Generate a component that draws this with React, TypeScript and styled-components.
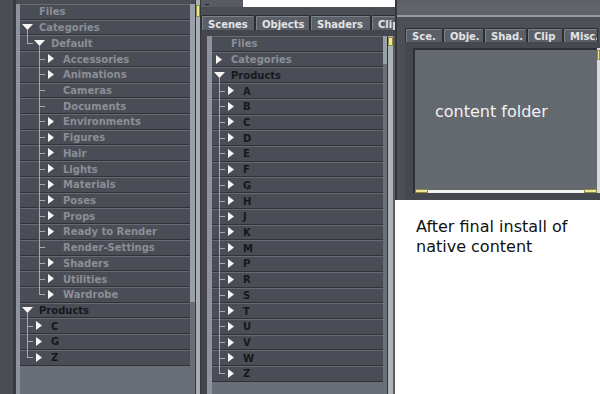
import React from 'react';
import styled, { createGlobalStyle, css } from 'styled-components';

const ROW_H = 15.72;

const Global = createGlobalStyle`
  html, body { margin: 0; padding: 0; background: #ffffff; }
  body { font-family: "DejaVu Sans", Verdana, sans-serif; }
`;

const Screen = styled.div`
  width: 600px;
  height: 394px;
  display: flex;
  overflow: hidden;
  background: #4a4d53;
`;

/* ---------- tree widgets ---------- */

const LeftPanel = styled.div`
  width: 195px;
  flex: 0 0 195px;
  display: flex;
  background: #4a4d53;
`;

const Gutter = styled.div`
  width: 13px;
  flex: 0 0 13px;
  background: #4a4d53;
  border-right: 3px solid #393b40;
`;

const TreeFrame = styled.div<{ $top: number }>`
  flex: 1;
  min-width: 0;
  display: flex;
  flex-direction: column;
  padding-top: ${p => p.$top}px;
  background: #4a4d53;
`;

const TreeBody = styled.div`
  flex: 1;
  display: flex;
  background: #6a6f77;
`;

const EdgeStrip = styled.div<{ $w: number }>`
  width: ${p => p.$w}px;
  flex: 0 0 ${p => p.$w}px;
  background: #8c959f;
`;

const Rows = styled.div`
  flex: 1;
  min-width: 0;
  display: flex;
  flex-direction: column;
`;

const ScrollTrack = styled.div<{ $w: number }>`
  width: ${p => p.$w}px;
  flex: 0 0 ${p => p.$w}px;
  display: flex;
  flex-direction: column;
  background: #6a6f77;
`;

const ScrollThumb = styled.div<{ $h: number }>`
  height: ${p => p.$h}px;
  background: #98a1ab;
`;

const Row = styled.div<{ $depth: number }>`
  box-sizing: border-box;
  height: ${ROW_H}px;
  flex: 0 0 ${ROW_H}px;
  display: flex;
  align-items: stretch;
  padding-left: ${p => p.$depth * 12}px;
  background: #4a4d55;
  border-bottom: 1px solid #303237;
  box-shadow: inset 0 1px 0 #666a72;
`;

const lineColor = '#a4a9af';

const Slot = styled.div<{ $branch: boolean; $last: boolean }>`
  position: relative;
  width: 14px;
  flex: 0 0 14px;
  display: flex;
  align-items: center;
  justify-content: center;
  ${p =>
    p.$branch &&
    css`
      &::before {
        content: '';
        position: absolute;
        left: -5px;
        top: -1px;
        width: 1px;
        height: ${p.$last ? 'calc(50% + 1px)' : 'calc(100% + 2px)'};
        background: ${lineColor};
      }
      &::after {
        content: '';
        position: absolute;
        left: -5px;
        top: 50%;
        width: 6px;
        height: 1px;
        background: ${lineColor};
      }
    `}
`;

const Stem = styled.span`
  position: absolute;
  left: 7px;
  top: calc(50% + 3px);
  bottom: -1px;
  width: 1px;
  background: ${lineColor};
`;

const Label = styled.span<{ $dim: boolean }>`
  align-self: center;
  margin-left: 5px;
  padding-top: 1px;
  font-size: 10px;
  font-weight: bold;
  white-space: nowrap;
  color: ${p => (p.$dim ? '#8b8f96' : '#17181b')};
`;

type Exp = 'down' | 'right' | 'none';
type Item = { label: string; depth: number; exp: Exp; dim: boolean; last?: boolean; kids?: boolean };

const DownTri = () => (
  <svg width="11" height="6" viewBox="0 0 11 6" style={{ position: 'relative', zIndex: 1 }}>
    <polygon points="0,0 11,0 5.5,6" fill="#f6f6f6" />
  </svg>
);

const RightTri = () => (
  <svg width="6" height="9" viewBox="0 0 6 9">
    <polygon points="0,0 6,4.5 0,9" fill="#f6f6f6" />
  </svg>
);

const TreeRow = ({ it }: { it: Item }) => (
  <Row $depth={it.depth}>
    <Slot $branch={it.depth > 0} $last={!!it.last}>
      {it.exp === 'down' && <DownTri />}
      {it.exp === 'right' && <RightTri />}
      {it.exp === 'down' && it.kids && <Stem />}
    </Slot>
    <Label $dim={it.dim}>{it.label}</Label>
  </Row>
);

const leftItems: Item[] = [
  { label: 'Files', depth: 0, exp: 'none', dim: true },
  { label: 'Categories', depth: 0, exp: 'down', dim: true, kids: true },
  { label: 'Default', depth: 1, exp: 'down', dim: true, last: true, kids: true },
  ...[
    ['Accessories', 'right'],
    ['Animations', 'right'],
    ['Cameras', 'none'],
    ['Documents', 'none'],
    ['Environments', 'right'],
    ['Figures', 'right'],
    ['Hair', 'right'],
    ['Lights', 'right'],
    ['Materials', 'right'],
    ['Poses', 'right'],
    ['Props', 'right'],
    ['Ready to Render', 'right'],
    ['Render-Settings', 'none'],
    ['Shaders', 'right'],
    ['Utilities', 'right'],
    ['Wardrobe', 'right'],
  ].map(([label, exp], i, arr) => ({
    label,
    depth: 2,
    exp: exp as Exp,
    dim: true,
    last: i === arr.length - 1,
  })),
  { label: 'Products', depth: 0, exp: 'down', dim: false, kids: true },
  ...['C', 'G', 'Z'].map((label, i, arr) => ({
    label,
    depth: 1,
    exp: 'right' as Exp,
    dim: false,
    last: i === arr.length - 1,
  })),
];

const letters = ['A', 'B', 'C', 'D', 'E', 'F', 'G', 'H', 'J', 'K', 'M', 'P', 'R', 'S', 'T', 'U', 'V', 'W', 'Z'];

const midItems: Item[] = [
  { label: 'Files', depth: 0, exp: 'none', dim: true },
  { label: 'Categories', depth: 0, exp: 'right', dim: true },
  { label: 'Products', depth: 0, exp: 'down', dim: false, kids: true },
  ...letters.map((label, i, arr) => ({
    label,
    depth: 1,
    exp: 'right' as Exp,
    dim: false,
    last: i === arr.length - 1,
  })),
];

/* ---------- splitters / markers ---------- */

const Splitter = styled.div`
  position: relative;
  width: 4px;
  flex: 0 0 4px;
  background: #a8aeb4;
  border-left: 1px solid #34363b;
  border-right: 1px solid #34363b;
`;

const Marker = styled.div<{ $w: number; $h: number; $top: number }>`
  position: absolute;
  left: 0;
  top: ${p => p.$top}px;
  box-sizing: border-box;
  width: ${p => p.$w}px;
  height: ${p => p.$h}px;
  background: #ece79c;
  border: 1px solid #8f8a3e;
`;

/* ---------- middle panel ---------- */

const MiddlePanel = styled.div`
  width: 194px;
  flex: 0 0 194px;
  display: flex;
  flex-direction: column;
  background: #4b4e54;
`;

const TopStrip = styled.div`
  height: 7px;
  flex: 0 0 7px;
  display: flex;
`;

const TopGray = styled.div`
  position: relative;
  width: 42px;
  background: #585b61;
`;

const Dash = styled.span`
  position: absolute;
  left: 4px;
  top: 4px;
  width: 4px;
  height: 1px;
  background: #1f2023;
`;

const TopWhite = styled.div`
  flex: 1;
  background: #ffffff;
`;

const TabBar = styled.div<{ $h: number; $mt: number; $ml: number }>`
  height: ${p => p.$h}px;
  flex: 0 0 ${p => p.$h}px;
  margin-top: ${p => p.$mt}px;
  margin-left: ${p => p.$ml}px;
  display: flex;
  overflow: hidden;
`;

const Tab = styled.div<{ $w?: number }>`
  box-sizing: border-box;
  ${p => (p.$w ? `width: ${p.$w}px; flex: 0 0 ${p.$w}px;` : 'flex: 1 0 auto;')}
  padding: 2px 0 0 6px;
  display: flex;
  align-items: center;
  background: #5b5f67;
  border: 1px solid #2b2d31;
  border-bottom: none;
  border-radius: 2px 2px 0 0;
  box-shadow: inset 1px 1px 0 #7d8189;
  font-size: 10px;
  font-weight: bold;
  color: #e2e3e5;
  white-space: nowrap;
  overflow: hidden;
`;

const MidBody = styled.div`
  flex: 1;
  display: flex;
  padding: 6px 0 0 6px;
  background: #43464c;
  min-height: 0;
`;

const MidTree = styled.div`
  flex: 1;
  display: flex;
  min-width: 0;
  background: #6a6f77;
`;

const SideRail = styled.div`
  position: relative;
  width: 5px;
  flex: 0 0 5px;
  background: #aeb3b8;
  border-left: 1px solid #303236;
  border-right: 2px solid #595d63;
`;

/* ---------- right column ---------- */

const RightColumn = styled.div`
  flex: 1;
  display: flex;
  flex-direction: column;
  background: #ffffff;
`;

const Viewer = styled.div`
  height: 200px;
  flex: 0 0 200px;
  display: flex;
  flex-direction: column;
  background: #4c4f55;
  border-left: 2px solid #34363b;
`;

const ViewerHeader = styled.div`
  height: 15px;
  flex: 0 0 15px;
  background: linear-gradient(180deg, #5c6066 0%, #62666c 60%, #5c6066 100%);
  border-bottom: 2px solid #979ba1;
`;

const ViewerPanel = styled.div`
  flex: 1;
  display: flex;
  margin-left: 8px;
  padding: 6px 0 7px 8px;
  background: #45484e;
`;

const ContentCol = styled.div`
  flex: 1;
  display: flex;
  flex-direction: column;
`;

const ContentBox = styled.div`
  flex: 1;
  padding: 52px 0 0 20px;
  background: #646970;
  border-top: 2px solid #2e3034;
  border-left: 2px solid #2e3034;
  font-size: 16px;
  line-height: 20px;
  color: #f2f2f2;
`;

const HScroll = styled.div`
  position: relative;
  height: 3px;
  flex: 0 0 3px;
  background: #f2f2f0;
  border-left: 2px solid #2e3034;
`;

const HMarker = styled.div<{ $side: 'left' | 'right' }>`
  position: absolute;
  top: -1px;
  ${p => (p.$side === 'left' ? 'left: 0;' : 'right: 0;')}
  box-sizing: border-box;
  width: 13px;
  height: 4px;
  background: #ece79c;
  border: 1px solid #8f8a3e;
`;

const VScroll = styled.div`
  position: relative;
  width: 3px;
  flex: 0 0 3px;
  background: #d8dadc;
  border-right: 0;
`;

const Caption = styled.div`
  padding: 17px 0 0 21px;
  max-width: 170px;
  font-size: 16px;
  line-height: 20px;
  color: #111111;
`;

export default function App() {
  return (
    <>
      <Global />
      <Screen>
        <LeftPanel>
          <Gutter />
          <TreeFrame $top={4}>
            <TreeBody>
              <EdgeStrip $w={4} />
              <Rows>
                {leftItems.map((it, i) => (
                  <TreeRow key={i} it={it} />
                ))}
              </Rows>
              <ScrollTrack $w={5}>
                <ScrollThumb $h={298} />
              </ScrollTrack>
            </TreeBody>
          </TreeFrame>
        </LeftPanel>

        <Splitter>
          <Marker $w={4} $h={12} $top={5} />
        </Splitter>

        <MiddlePanel>
          <TopStrip>
            <TopGray>
              <Dash />
            </TopGray>
            <TopWhite />
          </TopStrip>
          <TabBar $h={15} $mt={8} $ml={0}>
            <Tab $w={54}>Scenes</Tab>
            <Tab $w={55}>Objects</Tab>
            <Tab $w={61}>Shaders</Tab>
            <Tab>Clip</Tab>
          </TabBar>
          <MidBody>
            <MidTree>
              <EdgeStrip $w={5} />
              <Rows>
                {midItems.map((it, i) => (
                  <TreeRow key={i} it={it} />
                ))}
              </Rows>
              <ScrollTrack $w={4}>
                <ScrollThumb $h={28} />
              </ScrollTrack>
            </MidTree>
            <SideRail>
              <Marker $w={5} $h={9} $top={1} />
            </SideRail>
          </MidBody>
        </MiddlePanel>

        <RightColumn>
          <Viewer>
            <ViewerHeader />
            <TabBar $h={14} $mt={11} $ml={8}>
              <Tab $w={38}>Sce.</Tab>
              <Tab $w={41}>Obje.</Tab>
              <Tab $w={43}>Shad.</Tab>
              <Tab $w={36}>Clip</Tab>
              <Tab $w={35}>Misc.</Tab>
            </TabBar>
            <ViewerPanel>
              <ContentCol>
                <ContentBox>content folder</ContentBox>
                <HScroll>
                  <HMarker $side="left" />
                  <HMarker $side="right" />
                </HScroll>
              </ContentCol>
              <VScroll>
                <Marker $w={3} $h={10} $top={2} />
              </VScroll>
            </ViewerPanel>
          </Viewer>
          <Caption>After final install of native content</Caption>
        </RightColumn>
      </Screen>
    </>
  );
}
